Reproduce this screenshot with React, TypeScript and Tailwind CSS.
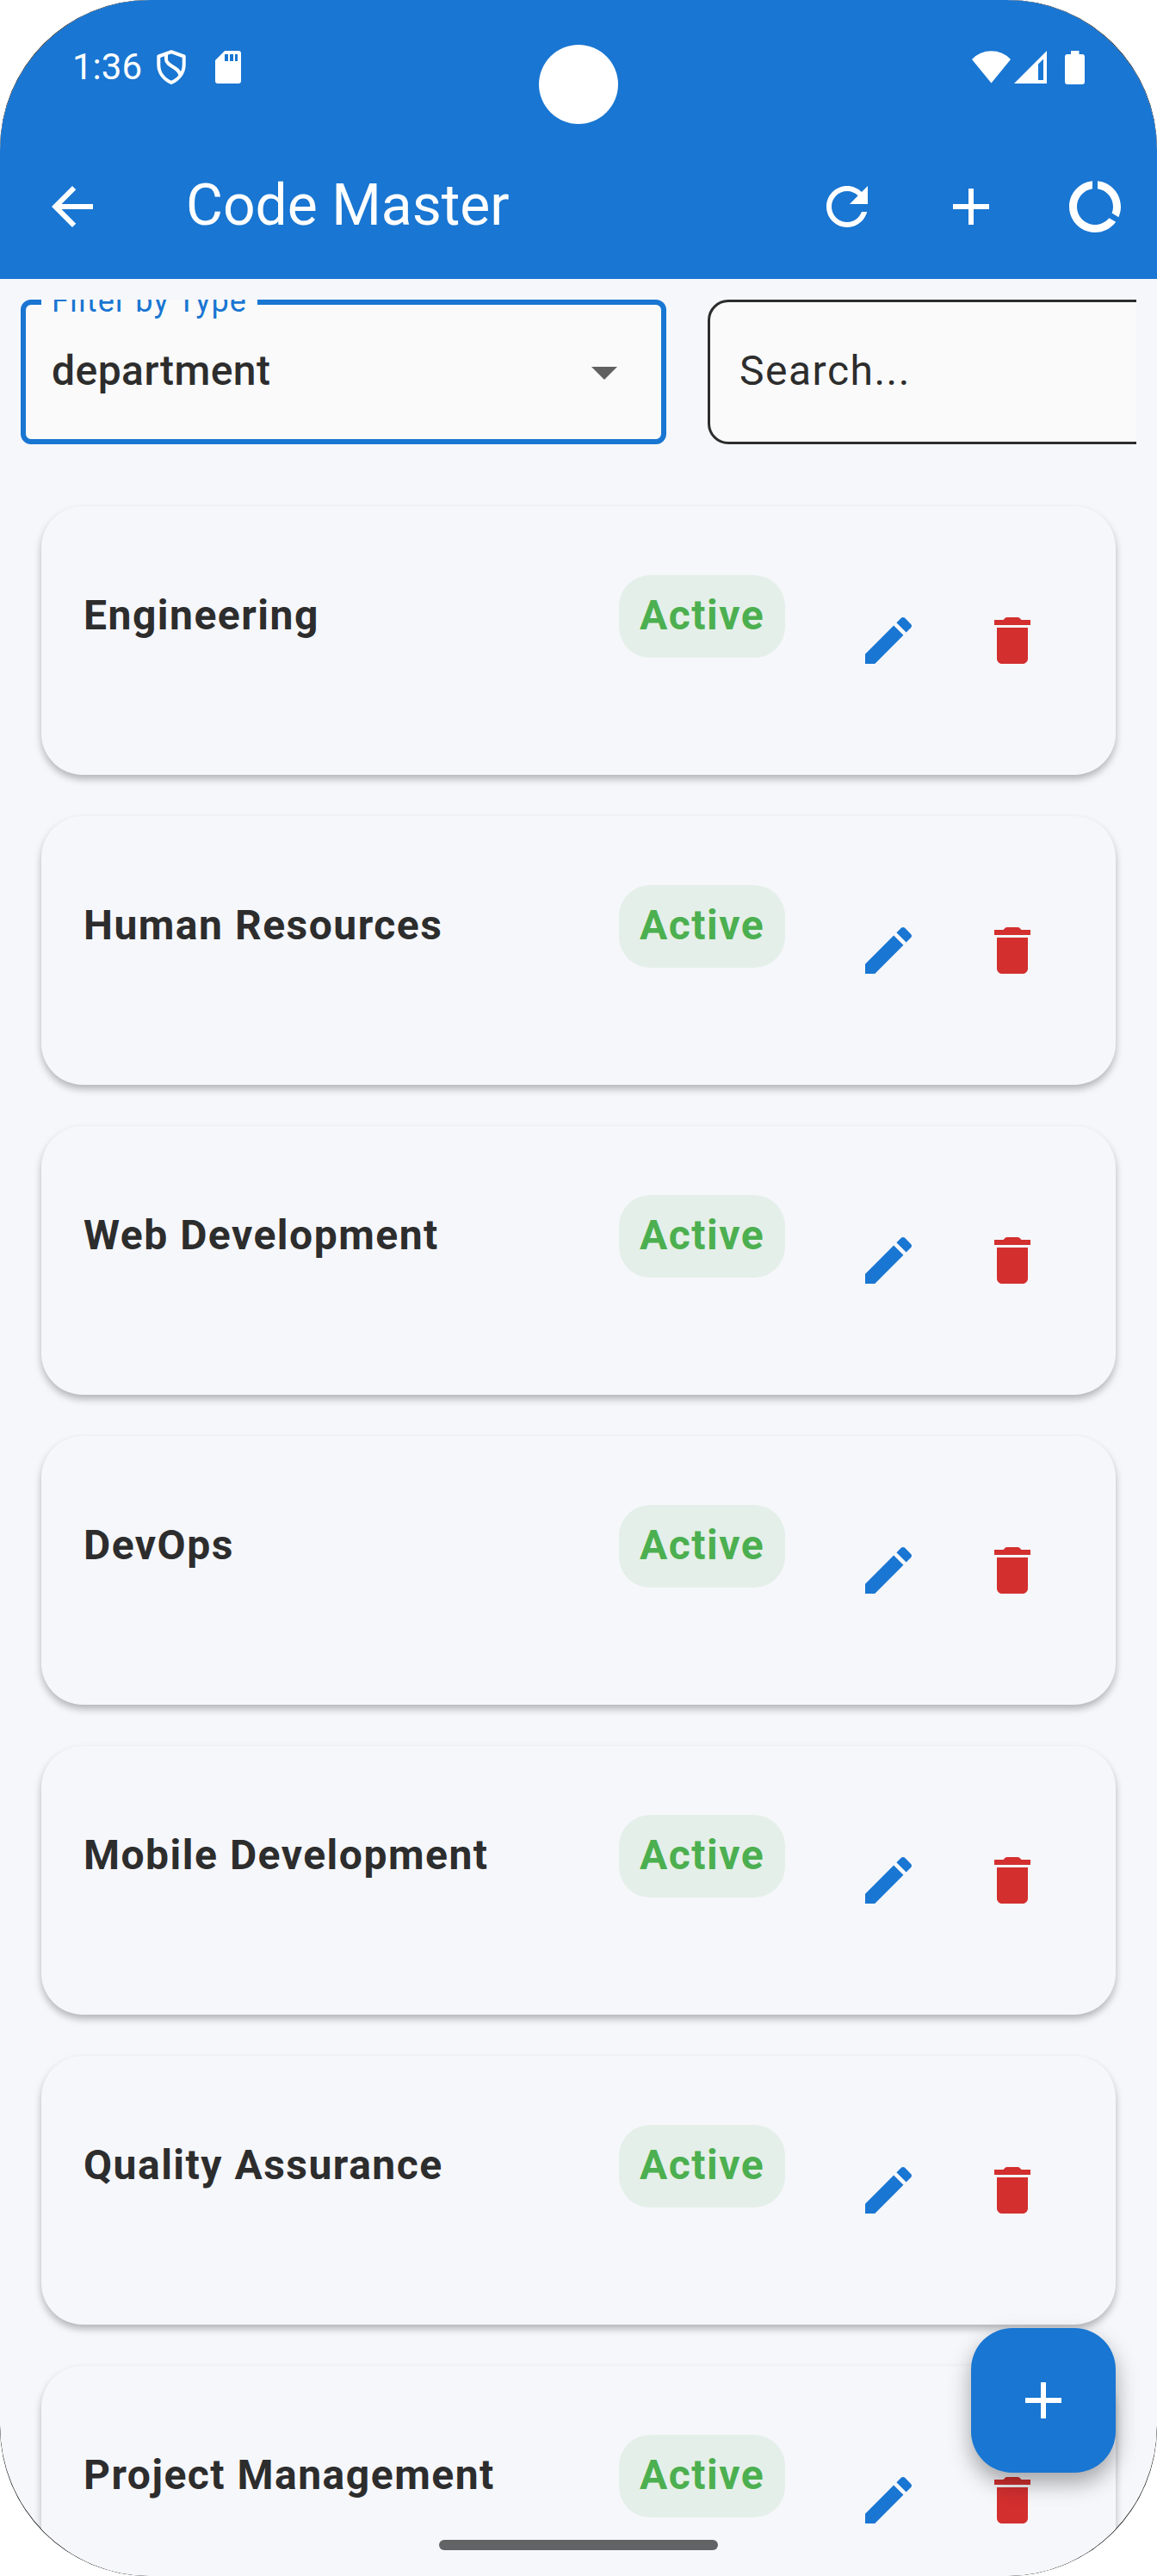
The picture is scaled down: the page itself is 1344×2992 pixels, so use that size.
import type { ReactNode } from "react";

const departments = [
  "Engineering",
  "Human Resources",
  "Web Development",
  "DevOps",
  "Mobile Development",
  "Quality Assurance",
  "Project Management",
];

function Icon({ d, className = "" }: { d: string; className?: string }) {
  return (
    <svg viewBox="0 0 24 24" className={`size-[72px] shrink-0 fill-current ${className}`}>
      <path d={d} />
    </svg>
  );
}

const paths = {
  back: "M20 11H7.83l5.59-5.59L12 4l-8 8 8 8 1.41-1.41L7.83 13H20v-2z",
  refresh:
    "M17.65 6.35C16.2 4.9 14.21 4 12 4c-4.42 0-7.99 3.58-7.99 8s3.57 8 7.99 8c3.73 0 6.84-2.55 7.73-6h-2.08c-.82 2.33-3.04 4-5.65 4-3.31 0-6-2.69-6-6s2.69-6 6-6c1.66 0 3.14.69 4.22 1.78L13 11h7V4l-2.35 2.35z",
  add: "M19 13h-6v6h-2v-6H5v-2h6V5h2v6h6v2z",
  usage:
    "M13 2.05v3.03c3.39.49 6 3.39 6 6.92 0 .9-.18 1.75-.48 2.54l2.6 1.53c.56-1.24.88-2.62.88-4.07 0-5.18-3.95-9.45-9-9.95zM12 19c-3.87 0-7-3.13-7-7 0-3.53 2.61-6.43 6-6.92V2.05c-5.06.5-9 4.76-9 9.95 0 5.52 4.47 10 9.99 10 3.31 0 6.24-1.61 8.06-4.09l-2.6-1.53C16.17 17.98 14.21 19 12 19z",
  dropdown: "M7 10l5 5 5-5z",
  edit: "M3 17.25V21h3.75L17.81 9.94l-3.75-3.75L3 17.25zM20.71 7.04c.39-.39.39-1.02 0-1.41l-2.34-2.34c-.39-.39-1.02-.39-1.41 0l-1.83 1.83 3.75 3.75 1.83-1.83z",
  trash:
    "M6 19c0 1.1.9 2 2 2h8c1.1 0 2-.9 2-2V7H6v12zM19 4h-3.5l-.71-.71c-.18-.18-.44-.29-.7-.29H9.91c-.26 0-.52.11-.7.29L8.5 4H5v2h14V4z",
};

function StatusBar() {
  return (
    <div className="flex h-[156px] items-start justify-between pt-[54px] pr-[84px] pl-[84px] text-white">
      <div className="flex h-12 items-center">
        <span className="w-[98px] text-[42px] leading-[48px]">1:36</span>
        <svg viewBox="0 0 34 40" className="h-10 w-[34px]" fill="none" stroke="white" strokeWidth="4">
          <path d="M17 2.200 2.300 7.500V17c0 9.500 6 17 14.700 21C25.700 34 31.700 26.500 31.700 17V7.500z" strokeLinejoin="round" />
          <path d="M11 4.500V11c0 8 16 9 16 18" />
        </svg>
        <svg viewBox="0 0 30 38" className="ml-[34px] h-[38px] w-[30px]" fill="white" fillRule="evenodd">
          <path d="M11 0h16a3 3 0 0 1 3 3v32a3 3 0 0 1-3 3H3a3 3 0 0 1-3-3V11zM11 4v8h4V4zM17 4v8h4V4zM23 4v8h3V4z" />
        </svg>
      </div>
      <div className="flex h-12 items-center">
        <svg viewBox="0 0 45 38" className="h-[38px] w-[45px]" fill="white">
          <path d="M22.500 37.500 0 10Q9 .3 22.500.3T45 10z" />
        </svg>
        <svg viewBox="0 0 38 38" className="ml-[4px] h-[38px] w-[38px]" fill="white" fillRule="evenodd">
          <path d="M38 0v38H0zM34 9.500 28 15.500V34h6z" />
        </svg>
        <svg viewBox="0 0 23 39" className="ml-[21px] h-[39px] w-[23px]" fill="white">
          <path d="M7 0h9.500v4H20a3 3 0 0 1 3 3v29a3 3 0 0 1-3 3H3a3 3 0 0 1-3-3V7a3 3 0 0 1 3-3h4z" />
        </svg>
      </div>
    </div>
  );
}

function AppBar() {
  return (
    <div className="flex h-[168px] items-center px-9 text-white">
      <Icon d={paths.back} className="ml-3" />
      <h1 className="ml-24 flex-1 pb-[2px] text-[66px] leading-[84px] font-normal">Code Master</h1>
      <div className="flex gap-[72px]">
        <Icon d={paths.refresh} />
        <Icon d={paths.add} />
        <Icon d={paths.usage} />
      </div>
    </div>
  );
}

function Filters() {
  return (
    <div className="mx-6 mt-6 flex h-[168px] shrink-0 gap-12 overflow-hidden text-[48px] tracking-[1.5px] text-[#2d2d2d]">
      <div className="relative flex w-[750px] shrink-0 items-center rounded-[12px] border-6 border-[#1976d2] bg-[#fafafa] pl-[30px]">
        <span className="absolute -top-[6px] left-[18px] h-[6px] w-[251px] bg-[#fafafa]">
          <span className="absolute -top-[19px] left-[12px] text-[36px] leading-[42px] tracking-[1.125px] whitespace-nowrap text-[#1976d2]">
            Filter by Type
          </span>
        </span>
        <span className="flex-1 pb-[2px] font-medium tracking-[0.45px]">department</span>
        <Icon d={paths.dropdown} className="mr-[30px] text-[#616161]" />
      </div>
      <div className="flex w-[750px] shrink-0 items-center rounded-[24px] border-3 border-[#2d2d2d] bg-[#fafafa] pb-[2px] pl-[34px]">
        Search...
      </div>
    </div>
  );
}

function DepartmentCard({ name }: { name: string }) {
  return (
    <li className="flex h-[312px] shrink-0 items-start rounded-[48px] bg-[#f6f7fb] pt-20 pr-[84px] pl-[49px] text-[48px] leading-[72px] font-bold tracking-[1.5px] shadow-[0_5px_8px_rgba(0,0,0,0.27)]">
      <span className="flex-1 pt-[11px] text-[#2d2d2d]">{name}</span>
      <span className="flex h-24 w-[193px] items-center justify-center rounded-[36px] bg-[#4caf50]/10 pb-[2px] text-[#4caf50]">
        Active
      </span>
      <div className="mt-10 ml-[84px] flex gap-[72px]">
        <Icon d={paths.edit} className="text-[#1976d2]" />
        <Icon d={paths.trash} className="text-[#d32f2f]" />
      </div>
    </li>
  );
}

function Overlay({ className, children }: { className: string; children?: ReactNode }) {
  return <div className={`absolute ${className}`}>{children}</div>;
}

export default function App() {
  return (
    <div className="h-[2992px] w-[1344px] overflow-hidden bg-white">
      <div className="h-full overflow-hidden rounded-[173px] bg-black">
        <div className="relative flex h-full flex-col overflow-hidden rounded-[175px] bg-[#f6f7fb] font-[Roboto,sans-serif]">
          <header className="shrink-0 bg-[#1976d2]">
            <StatusBar />
            <AppBar />
          </header>
          <Filters />
          <ul className="mt-[72px] flex flex-col gap-12 px-12">
            {departments.map((name) => (
              <DepartmentCard key={name} name={name} />
            ))}
          </ul>
          <Overlay className="top-[52px] left-[626px] size-[92px] rounded-full bg-white" />
          <Overlay className="right-12 bottom-[120px] flex size-[168px] items-center justify-center rounded-[48px] bg-[#1976d2] text-white shadow-[0_12px_26px_rgba(0,0,0,0.34)]">
            <Icon d={paths.add} />
          </Overlay>
          <Overlay className="bottom-[30px] left-[510px] h-3 w-[324px] rounded-full bg-[#626365]" />
        </div>
      </div>
    </div>
  );
}
